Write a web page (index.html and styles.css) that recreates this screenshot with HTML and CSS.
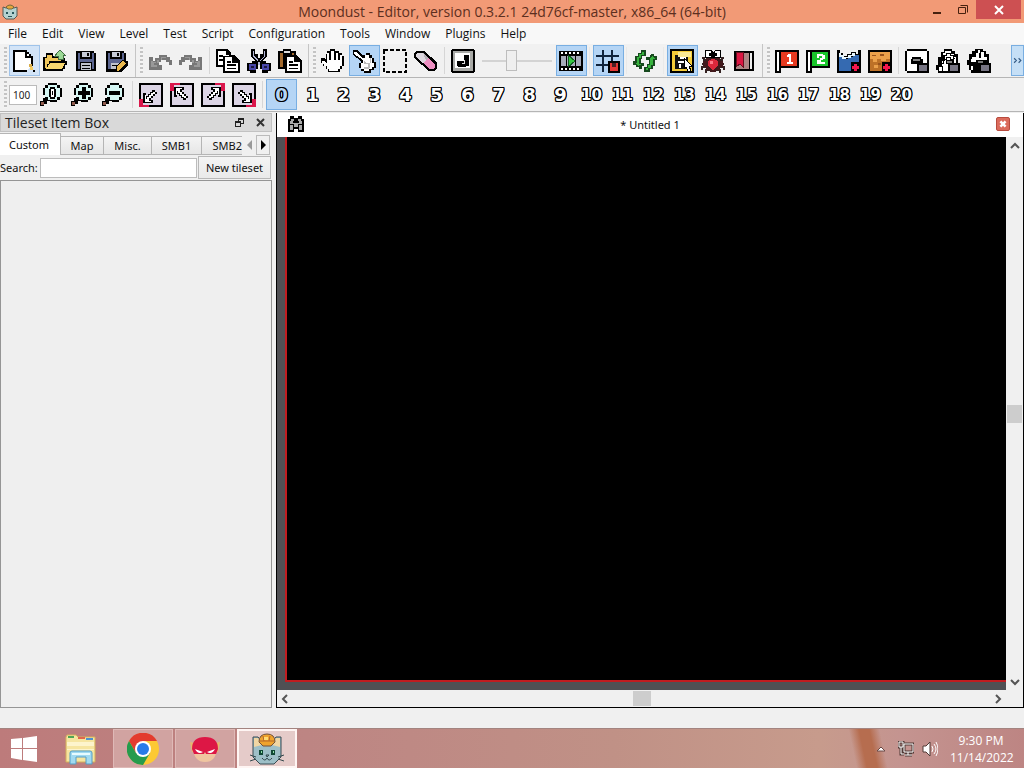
FILE: index.html
```html
<!DOCTYPE html>
<html lang="en">
<head>
<meta charset="utf-8">
<title>Moondust - Editor</title>
<link rel="stylesheet" href="styles.css">
</head>
<body>
<header class="titlebar">
  <svg class="app-icon" viewBox="0 0 16 16"><path d="M1 3l3 1h8l3-1v9l-3 3H4l-3-3z" fill="#b4d2d0" stroke="#555a55"/><path d="M4 3q4-4 8 0l-2 2H6z" fill="#e5a83c" stroke="#75683b"/><path d="M4 8h2v2H4zM10 8h2v2h-2zM6 12h4v1H6z" fill="#24545a"/></svg>
  <h1 class="title">Moondust - Editor, version 0.3.2.1 24d76cf-master, x86_64 (64-bit)</h1>
  <div class="window-buttons">
    <button class="win-btn" aria-label="Minimize"><svg viewBox="0 0 12 12"><path d="M2 8h8v2H2z" fill="#46210f"/></svg></button>
    <button class="win-btn" aria-label="Restore"><svg viewBox="0 0 12 12"><path d="M1.500 3.500h7v6h-7zM3.500 1.500h7v7" fill="none" stroke="#46210f"/></svg></button>
    <button class="win-btn win-close" aria-label="Close"><svg viewBox="0 0 12 12"><path d="M2 2l8 8M10 2l-8 8" stroke="#fff" stroke-width="2"/></svg></button>
  </div>
</header>
<nav class="menubar">
  <button>File</button><button>Edit</button><button>View</button><button>Level</button><button>Test</button><button>Script</button><button>Configuration</button><button>Tools</button><button>Window</button><button>Plugins</button><button>Help</button>
</nav>

<div class="toolbar-row">
  <div class="toolbar">
    <button class="tool hover" aria-label="New"><svg viewBox="0 0 24 24"><path d="M1 1h14v2h2v2h2v2h2v10h-2V9h-6V3H3v18h12v2H1z"/><path d="M3 3h10v6h6v8l-4 4H3z" fill="#fff"/><path d="M15 5h2v2h-2z" fill="#fff"/><path d="M17 15h3v3h-3z" fill="#d9ad48"/><path d="M18 18h3v3h-3z" fill="#f6cd62"/><path d="M21 21h2v2h-2z"/></svg></button>
    <button class="tool" aria-label="Open"><svg viewBox="0 0 24 24"><path d="M3 4h7v3h6V4h4v5h2v3h2v4h-2v4h-2v2H0V8h3z"/><path d="M4 6h5v3h9v3H6v3H4v4H2V9h2z" fill="#f1c75b"/><path d="M7 14h15l-3 6H3z" fill="#f8d76f"/><path d="M14 4l3-3 5 5h-2v4h-5V7h-3z" fill="#9bd996" stroke="#426f42"/></svg></button>
    <button class="tool" aria-label="Save"><svg viewBox="0 0 24 24"><path d="M2 2h18v2h2v18H2z"/><path d="M4 4h2v6h12V4h2v16h-2v-7H6v7H4z" fill="#5b6590"/><path d="M8 3h8v5H8z" fill="#c7cbd6"/><path d="M13 4h2v3h-2z"/><path d="M7 14h10v7H7z" fill="#bfc3cc"/><path d="M8 16h8v1H8zM8 19h8v1H8z"/></svg></button>
    <button class="tool" aria-label="Save as"><svg viewBox="0 0 24 24"><path d="M1 2h18v2h2v8h2v4l-7 7H1z"/><path d="M3 4h2v6h12V4h2v8l-7 8H3z" fill="#5b6590"/><path d="M7 3h8v5H7z" fill="#c7cbd6"/><path d="M12 4h2v3h-2z"/><path d="M6 14h8l-3 6H6z" fill="#bfc3cc"/><path d="M7 16h6v1H7z"/><path d="M18 11l4 3-8 8h-3v-4z" fill="#e9b84d" stroke="#000"/></svg></button>
  </div>
  <div class="toolbar">
    <button class="tool" aria-label="Undo"><svg viewBox="0 0 24 24"><path d="M1 8h4v4h2V9h4V6h8v2h3v3h2v5h-3v-3h-3v-2h-5v2h-2v3h3v5H1z" fill="#777"/><path d="M3 12v6h6v-2H6v-2h3v-3h4V8h5v1h-4v2h-3v3H8v-1H5v-1z" fill="#999"/></svg></button>
    <button class="tool" aria-label="Redo"><svg viewBox="0 0 24 24"><g transform="matrix(-1 0 0 1 24 0)"><path d="M1 8h4v4h2V9h4V6h8v2h3v3h2v5h-3v-3h-3v-2h-5v2h-2v3h3v5H1z" fill="#777"/><path d="M3 12v6h6v-2H6v-2h3v-3h4V8h5v1h-4v2h-3v3H8v-1H5v-1z" fill="#999"/></g></svg></button>
    <span class="sep"></span>
    <button class="tool" aria-label="Copy"><svg viewBox="0 0 24 24"><path d="M0 0h11l4 4v2h3l6 6v12H7v-6H0z"/><path d="M2 2h8v4h3v1H7v9H2z" fill="#fff"/><path d="M9 8h7v6h6v8H9z" fill="#fff"/><path d="M3 6h4v2H3zM3 10h4v2H3zM11 12h4v2h-4zM11 15h9v2h-9zM11 19h9v1h-9z"/></svg></button>
    <button class="tool" aria-label="Cut"><svg viewBox="0 0 24 24"><path d="M4 0h4v5h3v4h2V5h3V0h4v7l-4 5h3v2h5v8h-3v2h-6v-4h-2v-5h-2v5H9v4H3v-2H0v-8h5v-2h3L4 7z"/><path d="M6 2h1v5l4 4v2h2v-2l4-4V2h1v5l-5 6v3h-2v-3L6 8z" fill="#b5b9d7"/><path d="M2 15h7v6H2zM15 15h7v6h-7z" fill="#4947a8"/><path d="M4 17h3v2H4zM17 17h3v2h-3z" fill="#1a173f"/></svg></button>
    <button class="tool" aria-label="Paste"><svg viewBox="0 0 24 24"><path d="M0 2h5V0h8v2h5v4l6 6v12H7v-4H0z"/><path d="M2 4h3v14H2zM14 4h2v2h-2z" fill="#a36a2e"/><path d="M6 2h6v2H6z" fill="#ddd"/><path d="M9 8h7v5h6v9H9z" fill="#fff"/><path d="M11 12h4v2h-4zM11 15h9v2h-9zM11 19h9v1h-9z"/></svg></button>
  </div>
  <div class="toolbar">
    <button class="tool" aria-label="Hand scroll"><svg viewBox="0 0 24 24"><path d="M6 2h3V0h5v2h4v2h3v3h2v10h-2v3h-2v3H7v-3H5v-3H2v-3H0v-5h4v1h1V5h1z"/><path d="M6 4h2v7h2V2h3v9h2V4h2v7h2V6h2v11h-2v3h-2v2H8v-2H6v-3H3v-2H1v-3h2l3 2z" fill="#fff"/></svg></button>
    <button class="tool checked" aria-label="Select"><svg viewBox="0 0 24 24"><path d="M1 1h4l5 5h4V4h4v2h2v3h2v4h2v6h-2v2h-3v3h-7v-2h-3v-3H7v-5h2v-2L1 6z"/><path d="M2 3h2l6 6h3V6h4v3h3v5h2v4h-2v2h-3v2h-5v-2h-3v-3H9v-3h2v-3L2 5z" fill="#fff"/><path d="M12 12l2 2h4v4l-2 2h-4v-2h4v-3h-4zM18 9h1v5h-1z" fill="#bbb"/></svg></button>
    <button class="tool" aria-label="Rectangle selection"><svg viewBox="0 0 24 24"><path d="M1 1h22v22H1z" fill="none" stroke="#000" stroke-width="2" stroke-dasharray="4 2"/></svg></button>
    <button class="tool" aria-label="Eraser"><svg viewBox="0 0 24 24"><path d="M2 2h8l13 11v6l-3 3h-5L0 9V4z"/><path d="M3 4h6l5 5-5 5-7-6V5z" fill="#ddd8df"/><path d="M14 9l7 6v3l-2 2h-4l-6-6z" fill="#ed8fc2"/><path d="M9 4l6 5-3 2z" fill="#b5afb6"/></svg></button>
    <span class="sep"></span>
    <button class="tool" aria-label="Music"><svg viewBox="0 0 24 24"><path d="M1 0h22v1h1v22h-1v1H1v-1H0V1h1z"/><path d="M2 2h20v20H2z" fill="#a9aaa7"/><path d="M4 4h15v15H4z" fill="#fff"/><path d="M13 6h5v11h-3v1H7v-1H6v-5h7z"/><path d="M13 11h1v4h-3v-1h2z" fill="#ddd"/></svg></button>
    <input class="slider" type="range" min="0" max="100" value="40" disabled aria-label="Volume">
    <button class="tool checked" aria-label="Animation"><svg viewBox="0 0 24 24"><path d="M0 2h24v20H0z"/><path d="M2 7h20v10H2z" fill="#a7acbb"/><path d="M2 4h20M2 20h20" stroke="#fff" stroke-width="2" stroke-dasharray="2 2"/><path d="M7 6h1v12H7zM16 6h1v12h-1z"/><path d="M9 6l7 6-7 6z" fill="#36c743" stroke="#155d25"/></svg></button>
    <span class="sep faint"></span>
    <button class="tool checked" aria-label="Grid"><svg viewBox="0 0 24 24"><path d="M6 1h2v22H6zM15 1h2v12h-2zM0 6h23v2H0zM0 15h13v2H0z" fill="#11243c"/><path d="M12 12h12v12H12z"/><path d="M14 14h8v8h-8z" fill="#e43836"/><path d="M16 14h4v4h-4z" fill="#4a2024"/></svg></button>
    <span class="sep faint"></span>
    <button class="tool" aria-label="Reload"><svg viewBox="0 0 24 24"><path d="M10 1h3v6H9v3H8v4h3v3H9v3H6v-2H3v-2H0v-4h2V7h3V4h3V1z" fill="#17491e"/><path d="M9 3h2v3H8v3H6v6h2v1H6v1l-4-3h2V8h2V5h3z" fill="#37b43e"/><path d="M18 5h3v2h3v4h-2v6h-2v3h-3v3h-6v-5h3v-3h2v-4h-3V8h4z" fill="#17491e"/><path d="M19 7l3 3h-2v6h-2v3h-3v2h-2v-2h2v-3h2v-6h-1z" fill="#37b43e"/></svg></button>
    <span class="sep faint"></span>
    <button class="tool checked" aria-label="Tileset item box"><svg viewBox="0 0 24 24"><path d="M0 0h24v24H0z"/><path d="M2 2h20v20H2z" fill="#f5cc38"/><path d="M5 6h13v14H5z" fill="#111"/><path d="M8 3h13v5H8z" fill="#f9e894"/><path d="M10 8h6v2h-6zM8 12h9v2H8zM9 15h2v4H9z" fill="#fff"/><path d="M14 9l8 8h-3l2 5h-3l-2-4-2 2z" fill="#fff" stroke="#000"/></svg></button>
    <button class="tool" aria-label="Bug report"><svg viewBox="0 0 24 24"><path d="M1 9h2v2h3m17-2h-2v2h-3M1 15h22M1 21v-3h22v3M5 24v-3h14v3" fill="none" stroke="#342222" stroke-width="2"/><path d="M5 9h14v3h3v6h-3v3h-4v2H9v-2H5v-3H2v-6h3z" fill="#42191c"/><path d="M4 1h6l2 2 2-2h6v8H4z"/><path d="M5 2h5v6H5zM14 2h5v6h-5z" fill="#fff"/><path d="M8 4h2v3H8zM14 4h2v3h-2z"/><path d="M7 12l4-2h2l4 2v5l-5 4-5-4z" fill="#dc283c"/><path d="M9 12h3v3H9z" fill="#ff7988"/></svg></button>
    <button class="tool" aria-label="Bookmarks"><svg viewBox="0 0 24 24"><path d="M2 2h20v20H2z"/><path d="M4 4h13v16H4z" fill="#ad8585"/><path d="M4 3h7v15l-3-3-4 3z" fill="#dc1743" stroke="#681020"/><path d="M18 4h2v16h-2z" fill="#eee"/></svg></button>
  </div>
  <div class="toolbar grow">
    <button class="tool" aria-label="Player 1 start"><svg viewBox="0 0 24 24"><path d="M0 1h24v18H6v5H0z"/><path d="M2 3h2v19H2z" fill="#fff"/><path d="M6 3h16v14H6z" fill="#e63a20"/><path d="M13 5h3v8h2v2h-6v-2h2V8h-2V6h1z" fill="#fff"/></svg></button>
    <button class="tool" aria-label="Player 2 start"><svg viewBox="0 0 24 24"><path d="M0 1h24v18H6v5H0z"/><path d="M2 3h2v19H2z" fill="#fff"/><path d="M6 3h16v14H6z" fill="#19c62b"/><path d="M11 5h6v1h2v4h-2v1h-2v2h4v2h-8v-4h3V9h2V7h-3v2h-2z" fill="#fff"/></svg></button>
    <button class="tool" aria-label="Water"><svg viewBox="0 0 24 24"><path d="M0 1h3v3h3v3h4V5h4V3h5v2h2V1h3v23H0z"/><path d="M2 7h3v3h6V8h5V6h6v16H2z" fill="#356ab1"/><path d="M2 4h2v2h3v2h4V6h4V4h3v3h-4v2H9v1H5V8H2z" fill="#e8f7ff"/><path d="M14 13h10v11H14z"/><path d="M17 15h3v2h2v3h-2v2h-3v-2h-2v-3h2z" fill="#f1174d"/></svg></button>
    <button class="tool" aria-label="Sand"><svg viewBox="0 0 24 24"><path d="M0 1h24v23H0z"/><path d="M2 3h20v19H2z" fill="#bd7127"/><path d="M2 3h20v7h-4v2h-5v-2H9v3H5v-3H2zM6 16h4v3H6z" fill="#eba04a"/><path d="M4 6h4v1H4zM12 5h4v2h-4zM10 14h3v2h-3z" fill="#99531c"/><path d="M14 13h10v11H14z"/><path d="M17 15h3v2h2v3h-2v2h-3v-2h-2v-3h2z" fill="#f1174d"/></svg></button>
    <span class="sep"></span>
    <button class="tool" aria-label="Lock section"><svg viewBox="0 0 24 24"><path d="M2 0h20v2h2v22H2v-2H0V2h2z"/><path d="M2 2h20v20H2z" fill="#fff"/><path d="M7 8h9v2h2v4h6v10H12v-9H6v-5h1z"/><path d="M8 10h7v2H8z" fill="#858585"/><path d="M14 16h8v6h-8z" fill="#777583"/></svg></button>
    <button class="tool" aria-label="Lock backgrounds"><svg viewBox="0 0 24 24"><path d="M8 0h8v2h3v3h3v9h2v10H2v-3H0v-5h2V8h3V3h3z"/><path d="M9 2h6v3h3v3h2v6h-8v8H3v-5h3v-5h3V7H7V4h2z" fill="#fff"/><path d="M5 9h2V6h3V4h4v2h3v3h2M5 14h2v-4h3V8h4v2h3v4M3 17h3v5" fill="none" stroke="#000"/><path d="M10 11h7v3h7v10H12v-9h-2z"/><path d="M11 12h5v2h-5z" fill="#858585"/><path d="M14 16h8v6h-8z" fill="#777583"/></svg></button>
    <button class="tool" aria-label="Lock water"><svg viewBox="0 0 24 24"><path d="M8 0h8v2h3v3h3v9h2v10H4v-3H2v-5H0v-5h2V5h3V2h3z"/><path d="M5 8h4V4h3v5h2V3h3v5h3v3H9v2H4zM4 17h2v4H4zM11 1h2v3h-2z" fill="#fff"/><path d="M11 12h5v2h-5z" fill="#777"/><path d="M14 16h8v6h-8z" fill="#777583"/></svg></button>
    <button class="overflow" aria-label="More tools"><svg viewBox="0 0 8 8"><path d="M1 2l2 2-2 2M5 2l2 2-2 2" fill="none" stroke="#345a84"/></svg></button>
  </div>
</div>

<div class="toolbar-row">
  <div class="toolbar grow">
    <input class="zoom-value" type="text" value="100" aria-label="Zoom percent">
    <button class="tool" aria-label="Reset zoom"><svg viewBox="0 0 24 24"><defs><g id="lens"><path d="M8 0h9v2h3v3h2v9h-2v3h-3v2h-7v-1H7v3H4v2H0v-5h3v-3h2v-3H3V5h2V2h3z"/><path d="M8 2h9v3h3v9h-3v3H8v-3H5V5h3z" fill="#d6f7f4"/><path d="M1 19h3v3H1z" fill="#915b4d"/></g></defs><use href="#lens"/><path d="M10 4h5v2h1v8h-1v2h-5v-2H9V6h1z"/><path d="M11 6h3v8h-3z" fill="#fff"/><path d="M12 8h1v4h-1z"/></svg></button>
    <button class="tool" aria-label="Zoom in"><svg viewBox="0 0 24 24"><use href="#lens"/><path d="M11 4h4v4h4v4h-4v4h-4v-4H7V8h4z"/></svg></button>
    <button class="tool" aria-label="Zoom out"><svg viewBox="0 0 24 24"><use href="#lens"/><path d="M7 8h11v4H7z"/></svg></button>
    <span class="sep"></span>
    <button class="tool" aria-label="Go to bottom left"><svg viewBox="0 0 24 24"><defs><g id="corner"><path d="M0 0h24v24H0z"/><path d="M2 2h20v20H2z" fill="#dcd5e5"/><path d="M0 0h10v2H4v6H0z" fill="#da174b"/><path d="M4 4h10v3h-2v2h2v2h2v2h2v2h-2v2h-3v-2h-2v-2H9v-2H7v3H4z"/><path d="M6 5h6v1h-2v3h2v2h2v2h2v2h-2v-1h-2v-2h-2v-2H8V8H7v4H6z" fill="#fff"/></g></defs><g transform="matrix(1 0 0 -1 0 24)"><use href="#corner"/></g></svg></button>
    <button class="tool" aria-label="Go to top left"><svg viewBox="0 0 24 24"><use href="#corner"/></svg></button>
    <button class="tool" aria-label="Go to top right"><svg viewBox="0 0 24 24"><g transform="matrix(-1 0 0 1 24 0)"><use href="#corner"/></g></svg></button>
    <button class="tool" aria-label="Go to bottom right"><svg viewBox="0 0 24 24"><g transform="rotate(180 12 12)"><use href="#corner"/></g></svg></button>
    <span class="sep"></span>
    <button class="tool num checked">0</button><button class="tool num">1</button><button class="tool num">2</button><button class="tool num">3</button><button class="tool num">4</button><button class="tool num">5</button><button class="tool num">6</button><button class="tool num">7</button><button class="tool num">8</button><button class="tool num">9</button><button class="tool num two">10</button><button class="tool num two">11</button><button class="tool num two">12</button><button class="tool num two">13</button><button class="tool num two">14</button><button class="tool num two">15</button><button class="tool num two">16</button><button class="tool num two">17</button><button class="tool num two">18</button><button class="tool num two">19</button><button class="tool num two">20</button>
  </div>
</div>

<main class="main">
  <aside class="dock">
    <div class="dock-title">
      <h2>Tileset Item Box</h2>
      <button class="dock-btn" aria-label="Float"><svg viewBox="0 0 9 9"><path d="M3 0h6v6H6v3H0V3h3zM4 2v1h2v2h2V2zM1 5v3h4V5z" fill-rule="evenodd" fill="#222"/></svg></button>
      <button class="dock-btn" aria-label="Close panel"><svg viewBox="0 0 9 9"><path d="M1 1l7 7M8 1L1 8" stroke="#333" stroke-width="2"/></svg></button>
    </div>
    <div class="tabs" role="tablist">
      <button class="tab active" role="tab">Custom</button><button class="tab" role="tab">Map</button><button class="tab wide" role="tab">Misc.</button><button class="tab wider" role="tab">SMB1</button><button class="tab last" role="tab">SMB2</button>
      <button class="tab-scroll off" aria-label="Scroll tabs left"><svg viewBox="0 0 10 10"><path d="M8 0v10L3 5z" fill="#999"/></svg></button>
      <button class="tab-scroll" aria-label="Scroll tabs right"><svg viewBox="0 0 10 10"><path d="M3 0v10l5-5z"/></svg></button>
    </div>
    <div class="search-row">
      <label for="search">Search:</label>
      <input id="search" type="text">
      <button class="new-tileset">New tileset</button>
    </div>
    <div class="tileset-area"></div>
  </aside>
  <section class="workspace">
    <div class="doc-tab">
      <svg class="doc-icon" viewBox="0 0 16 16"><path d="M2 0h4v2h4V0h4v3h2v13h-6v-3H6v3H0V3h2z"/><path d="M3 3h3v2h4V3h3v2h1v3H2V5h1zM2 9h3v5H2zM11 9h3v5h-3zM6 8h4v3H6z" fill="#aaa"/><path d="M5 5h6v2H5z"/></svg>
      <span class="doc-name">* Untitled 1</span>
      <button class="doc-close" aria-label="Close document"><svg viewBox="0 0 14 14"><path d="M4 4l6 6M10 4l-6 6" stroke="#fff" stroke-width="3"/></svg></button>
    </div>
    <div class="view">
      <div class="canvas"><div class="level"></div></div>
      <div class="vscroll">
        <button aria-label="Scroll up"><svg viewBox="0 0 10 10"><path d="M1 7l4-4 4 4" fill="none" stroke="#555" stroke-width="2"/></svg></button>
        <span class="vthumb"></span>
        <button aria-label="Scroll down"><svg viewBox="0 0 10 10"><path d="M1 3l4 4 4-4" fill="none" stroke="#555" stroke-width="2"/></svg></button>
      </div>
      <div class="hscroll">
        <button aria-label="Scroll left"><svg viewBox="0 0 10 10"><path d="M7 1L3 5l4 4" fill="none" stroke="#555" stroke-width="2"/></svg></button>
        <span class="hthumb"></span>
        <button aria-label="Scroll right"><svg viewBox="0 0 10 10"><path d="M3 1l4 4-4 4" fill="none" stroke="#555" stroke-width="2"/></svg></button>
      </div>
    </div>
  </section>
</main>

<footer class="taskbar">
  <button class="start" aria-label="Start"><svg width="28" height="28" viewBox="0 0 28 28"><path d="M1 4l11-1v10H1zM13 3l14-2v12H13zM1 14h11v11L1 23zM13 14h14v13l-14-2z" fill="#fff"/></svg></button>
  <button class="task plain" aria-label="File Explorer"><svg width="34" height="32" viewBox="0 0 34 32"><path d="M2 4l1-2h9l2 2h17v25H2z" fill="#f6e5a0" stroke="#d4b05c"/><path d="M4 3h6v2H4z" fill="#4fa657"/><path d="M14 4h7v2h-7z" fill="#e2674b"/><path d="M22 5h7v2h-7z" fill="#4e93cf"/><path d="M3 9h27v4H3zM3 16h27v1H3z" fill="#fdf4cc"/><path d="M6 31V20q0-2 2-2h18q2 0 2 2v11h-6v-7H12v7z" fill="#a1daf0" stroke="#559dc5"/><path d="M8 20h18v2H8z" fill="#e7fbff"/></svg></button>
  <button class="task" aria-label="Chrome"><svg width="32" height="32" viewBox="0 0 32 32"><circle cx="16" cy="16" r="16" fill="#fcc934"/><path d="M2 8a16 16 0 0 1 28 0H16l-7 12z" fill="#e33b2e"/><path d="M2 8a16 16 0 0 0 14 24l7-12H9z" fill="#269b4d"/><circle cx="16" cy="16" r="8" fill="#fff"/><circle cx="16" cy="16" r="6" fill="#287be8"/></svg></button>
  <button class="task" aria-label="Masked hero"><svg width="32" height="32" viewBox="0 0 32 32"><path d="M1 9l4 1v9H3zM31 9l-4 1v9h2z" fill="#e8b86d"/><path d="M4 15h24q-1 14-12 14T4 15z" fill="#efc5a0"/><path d="M3 16Q3 4 16 4t13 12l-2 5H17l-1-2-1 2H5z" fill="#dd1745"/><path d="M6 16l8 3q-5 3-8-3zM26 16l-8 3q5 3 8-3z" fill="#fff"/></svg></button>
  <button class="task active" aria-label="Moondust Editor"><svg width="34" height="34" viewBox="0 0 34 34"><path d="M3 5h5l5 6h8l5-6h5v20l-7 7H10l-7-7z" fill="#9ebfc7" stroke="#394b52"/><path d="M4 6h4l4 7-8 2zM30 6h-4l-4 7 8 2z" fill="#f0d6a4"/><path d="M9 10q0-8 8-8t8 8l-4 4h-8z" fill="#efa32d" stroke="#70513c"/><path d="M10 9h14M13 4l1 5M20 4l-1 5" stroke="#b4672a" fill="none"/><path d="M14 5h4v3h-4z" fill="#ffdc72"/><path d="M9 18h4v5H9zM21 18h4v5h-4z" fill="#114835"/><path d="M11 19h1v2h-1zM23 19h1v2h-1z" fill="#8fe0a7"/><path d="M16 23h3l-2 2zM12 26q3 4 5 0 2 4 5 0M0 23l6 2M0 29l6-2M34 23l-6 2M34 29l-6-2" fill="none" stroke="#33484d"/></svg></button>
  <div class="tray">
    <button aria-label="Show hidden icons"><svg width="10" height="16" viewBox="0 0 10 16"><path d="M1 10l4-4 4 4z" fill="#fff" stroke="#6a4a48"/></svg></button>
    <button aria-label="Network"><svg width="16" height="16" viewBox="0 0 16 16"><path d="M6 3h9v8H6zM10 11v3M7 14h7M3 6v7h3M1 1h4v5H1z" fill="none" stroke="#503a37" stroke-width="3"/><path d="M6 3h9v8H6zM10 11v3M7 14h7M3 6v7h3M1 1h4v5H1z" fill="none" stroke="#fff"/></svg></button>
    <button aria-label="Volume"><svg width="16" height="16" viewBox="0 0 16 16"><path d="M1 5h3l4-4v14l-4-4H1z" fill="#fff" stroke="#503a37"/><path d="M10 5q2 3 0 6M12 3q4 5 0 10M14 1q4 7 0 14" fill="none" stroke="#fff"/></svg></button>
    <time class="clock"><span>9:30 PM</span><span>11/14/2022</span></time>
  </div>
</footer>
</body>
</html>
```
FILE: styles.css
```css
* { box-sizing: border-box; }
body {
  margin: 0;
  min-height: 100vh;
  display: flex;
  flex-direction: column;
  background: #f0f0f0;
  color: #111;
  font-family: "Noto Sans", "Open Sans", sans-serif;
  font-size: 11px;
}
button { font: inherit; color: inherit; border: 0; padding: 0; background: none; }
svg { display: block; flex: none; }

.titlebar { height: 23px; display: flex; align-items: center; background: #f29a76; padding-left: 2px; }
.app-icon { width: 16px; height: 18px; }
.title { flex: 1; margin: 0; padding-left: 82px; text-align: center; font: 14px/22px "Open Sans", sans-serif; color: #5c2f20; white-space: nowrap; }
.window-buttons { display: flex; align-self: stretch; padding-right: 3px; }
.win-btn { width: 26px; height: 19px; display: grid; place-items: center; }
.win-btn svg { width: 12px; height: 12px; }
.win-close { width: 45px; background: #cd5052; }

.menubar { height: 21px; display: flex; gap: 15px; padding-left: 8px; background: #f8f8f8; font-family: "Open Sans", sans-serif; font-size: 12px; line-height: 20px; }

.toolbar-row { height: 34px; display: flex; border-bottom: 1px solid #b5b5b5; background: #f1f1f1; }
.toolbar { display: flex; align-items: center; padding-right: 2px; border-right: 1px solid #c5c5c5; }
.toolbar:first-child { padding-left: 0; }
.toolbar.grow { flex: 1; border-right: 0; padding-right: 0; }
.toolbar::before { content: ""; width: 3px; height: 27px; margin: 0 2px 0 4px; background: repeating-linear-gradient(#c4c4c4 0 2px, #f4f4f4 2px 4px); }
.tool { width: 31px; height: 31px; flex: none; padding: 2px; border: 1px solid transparent; }
.tool svg { width: 24px; height: 24px; shape-rendering: crispEdges; }
.tool.hover { background: #d3e4f7; border-color: #9fc3ea; }
.tool.checked { background: #b5d5f5; border-color: #78aee2; }
.sep { width: 6px; height: 27px; flex: none; background: linear-gradient(90deg, transparent 2px, #d6d6d6 2px 3px, transparent 3px); }
.sep.faint { opacity: .3; }
.slider { appearance: none; width: 70px; height: 24px; margin: 0 4px 0 3px; background: linear-gradient(#d3d3d3, #d3d3d3) center / 100% 2px no-repeat; }
.slider::-webkit-slider-thumb { appearance: none; width: 11px; height: 21px; background: #efefef; border: 1px solid #bdbdbd; }
.overflow { width: 13px; height: 31px; margin-left: auto; display: grid; place-items: center; background: #c5dff6; border: 1px solid #79aee1; }
.overflow svg { width: 9px; height: 9px; }
.zoom-value { width: 28px; height: 20px; padding: 0 3px; border: 1px solid #bbb; background: #fff; font: 10px "Noto Sans", sans-serif; color: #222; }
.num {
  padding: 0;
  font: bold 18px/28px "DejaVu Sans", sans-serif;
  color: #fff;
  text-shadow: 1px 0 #000, -1px 0 #000, 0 1px #000, 0 -1px #000, 1px 1px #000, -1px -1px #000, 1px -1px #000, -1px 1px #000;
}
.num.two { font-size: 15px; }
.num.checked { color: #b5d5f5; }

.main { flex: 1; display: flex; gap: 4px; padding-top: 1px; margin-bottom: 20px; }
.dock { width: 272px; display: flex; flex-direction: column; }
.dock-title { height: 19px; display: flex; align-items: center; padding: 0 6px 0 4px; gap: 12px; background: #d9d9d9; border: 1px solid #c2c2c2; }
.dock-title h2 { flex: 1; margin: 0; font: 14px/17px "Open Sans", sans-serif; color: #222; }
.dock-btn svg { width: 9px; height: 9px; }
.tabs { height: 23px; display: flex; align-items: flex-end; padding-top: 1px; }
.tab { height: 19px; width: 43px; border: 1px solid #b5b5b5; border-left: 0; background: linear-gradient(#f4f4f4, #e6e6e6); white-space: nowrap; overflow: hidden; line-height: 17px; }
.tab.active { width: 61px; height: 22px; background: #fff; border-bottom: 0; padding-right: 2px; line-height: 20px; }
.tab.wide { width: 48px; }
.tab.wider { width: 50px; }
.tab.last { width: 40px; border-right: 0; text-align: right; }
.tab-scroll { width: 14px; height: 20px; display: grid; place-items: center; border: 1px solid #bbb; background: #f0f0f0; }
.tab-scroll.off { border-color: transparent; }
.tab-scroll svg { width: 10px; height: 10px; }
.search-row { height: 25px; display: flex; align-items: center; padding-right: 1px; }
.search-row label { width: 40px; }
.search-row input { flex: 1; min-width: 0; height: 20px; border: 1px solid #bcbcbc; background: #fff; margin-right: 1px; }
.new-tileset { width: 73px; height: 23px; border: 1px solid #b8b8b8; background: linear-gradient(#f4f4f4, #eaeaea); }
.tileset-area { flex: 1; border: 1px solid #959595; background: #efefef; }

.workspace { flex: 1; display: flex; flex-direction: column; border: 1px solid #000; border-top: 0; background: #fff; }
.doc-tab { height: 24px; display: flex; align-items: center; padding: 0 13px 2px 11px; }
.doc-icon { width: 16px; height: 16px; shape-rendering: crispEdges; }
.doc-name { flex: 1; text-align: center; }
.doc-close { width: 14px; height: 14px; border-radius: 2px; background: #db6b5c; border: 1px solid #b84b3e; }
.doc-close svg { width: 12px; height: 12px; }
.view { flex: 1; display: grid; grid-template: 1fr 17px / 1fr 17px; background: #f0f0f0; }
.canvas { display: flex; padding: 0 0 8px 8px; background: #505054; }
.level { flex: 1; background: #000; border: solid #c01c20; border-width: 0 0 2px 2px; }
.vscroll { display: flex; flex-direction: column; justify-content: space-between; align-items: center; padding: 4px 0 3px; }
.hscroll { display: flex; justify-content: space-between; align-items: center; padding: 0 3px; }
.vscroll svg, .hscroll svg { width: 10px; height: 10px; }
.vthumb { width: 15px; height: 18px; background: #cdcdcd; }
.hthumb { width: 18px; height: 15px; background: #cdcdcd; }

.taskbar {
  height: 40px;
  display: flex;
  align-items: stretch;
  border-top: 1px solid #a38480;
  background:
    linear-gradient(78deg, transparent 83%, #b66d4f 84%, #b66d4f 85%, transparent 86%),
    linear-gradient(90deg, #bd7b7b 0%, #bd8583 30%, #c09186 60%, #c79b8c 80%, #c49490 88%, #bd8583 100%);
}
.start { width: 47px; display: grid; place-items: center; }
.task { width: 60px; margin-right: 2px; display: grid; place-items: center; border: 1px solid #dfb9b7; background: #d1a3a1; }
.task.plain { width: 64px; padding-left: 4px; background: none; border: 0; }
.task.active { background: #e5cbc9; border: 2px solid #fff5f3; }
.tray { margin-left: auto; display: flex; align-items: center; gap: 8px; padding-right: 12px; color: #fff; }
.tray button:first-child { margin-right: 4px; }
.clock { display: flex; flex-direction: column; width: 62px; margin-left: 4px; text-align: center; font: 12px/17px "Open Sans", sans-serif; }
```
